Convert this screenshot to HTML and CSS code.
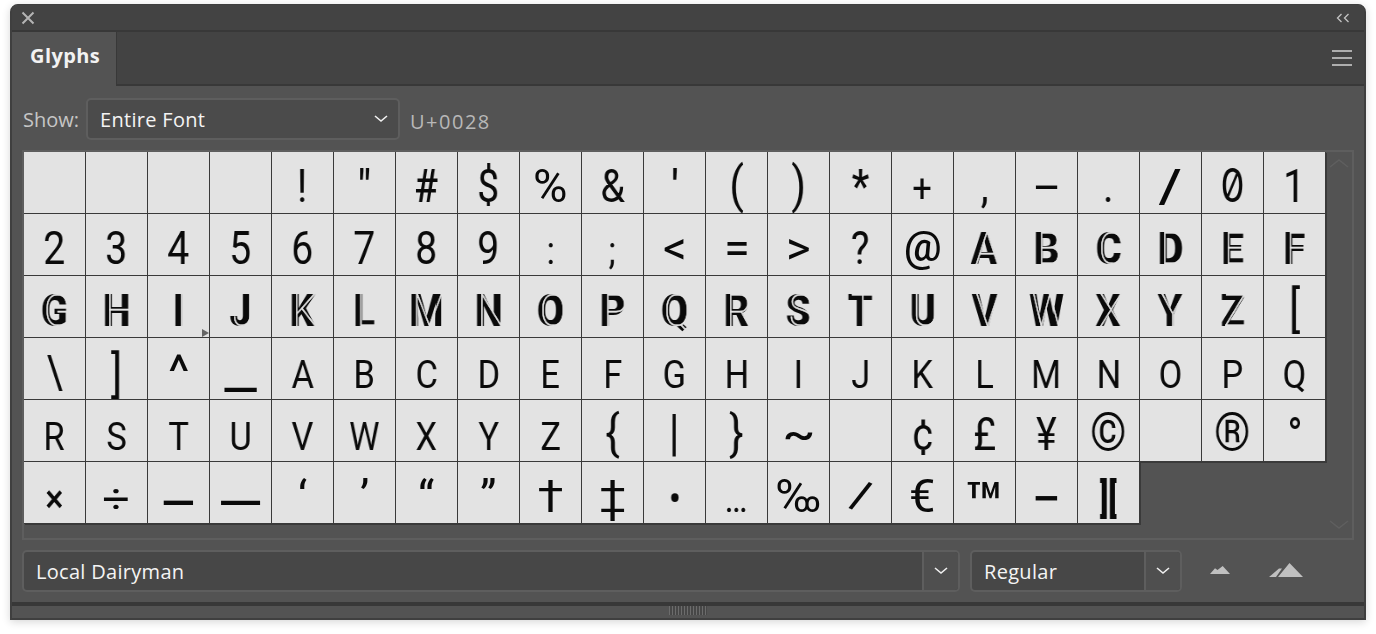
FILE: index.html
```html
<!DOCTYPE html>
<html lang="en">
<head>
<meta charset="utf-8">
<title>Glyphs</title>
<link rel="stylesheet" href="styles.css">
</head>
<body>
<div class="panel">
  <div class="titlebar">
    <svg class="ico" width="14" height="14" viewBox="0 0 14 14"><path d="M1.5 1.5l11 11M12.5 1.5l-11 11" stroke="#b4b4b4" stroke-width="2" fill="none"/></svg>
    <svg class="ico" width="14" height="10" viewBox="0 0 14 10"><path d="M5.5 1L1.5 5l4 4M12.5 1l-4 4 4 4" stroke="#c4c4c4" stroke-width="1.3" fill="none"/></svg>
  </div>
  <div class="tabs">
    <div class="tab">Glyphs</div>
    <svg class="menu" width="20" height="16" viewBox="0 0 20 16"><path d="M0 1h20M0 8h20M0 15h20" stroke="#aeaeae" stroke-width="2" fill="none"/></svg>
  </div>
  <div class="content">
    <div class="showrow">
      <span class="label">Show:</span>
      <div class="select show"><span class="value">Entire Font</span>
        <svg class="chev" width="14" height="8" viewBox="0 0 14 8"><path d="M1 1l6 5 6-5" stroke="#f0f0f0" stroke-width="1.6" fill="none"/></svg>
      </div>
      <span class="code">U+0028</span>
    </div>
    <div class="frame">
      <div class="grid">
        <div class="cell"></div><div class="cell"></div><div class="cell"></div><div class="cell"></div>
        <div class="cell"><span class="g d">!</span></div><div class="cell"><span class="g d up">"</span></div><div class="cell"><span class="g d b">#</span></div><div class="cell"><span class="g d">$</span></div><div class="cell"><span class="g d wider">%</span></div><div class="cell"><span class="g d">&amp;</span></div><div class="cell"><span class="g d up">'</span></div><div class="cell"><span class="g d tall">(</span></div><div class="cell"><span class="g d tall">)</span></div><div class="cell"><span class="g d b up">*</span></div><div class="cell"><span class="g s">+</span></div><div class="cell"><span class="g d">,</span></div><div class="cell"><span class="g d hy">-</span></div><div class="cell"><span class="g d">.</span></div><div class="cell"><span class="g d slash">/</span></div><div class="cell"><span class="g d zero">0</span></div><div class="cell"><span class="g d">1</span></div>

        <div class="cell"><span class="g d">2</span></div><div class="cell"><span class="g d">3</span></div><div class="cell"><span class="g d">4</span></div><div class="cell"><span class="g d">5</span></div><div class="cell"><span class="g d">6</span></div><div class="cell"><span class="g d">7</span></div><div class="cell"><span class="g d">8</span></div><div class="cell"><span class="g d">9</span></div><div class="cell"><span class="g s">:</span></div><div class="cell"><span class="g s">;</span></div><div class="cell"><span class="g s big">&lt;</span></div><div class="cell"><span class="g s big">=</span></div><div class="cell"><span class="g s big">&gt;</span></div><div class="cell"><span class="g d">?</span></div><div class="cell"><span class="g d at">@</span></div><div class="cell"><span class="g c" data-g="A">A</span></div><div class="cell"><span class="g c" data-g="B">B</span></div><div class="cell"><span class="g c" data-g="C">C</span></div><div class="cell"><span class="g c" data-g="D">D</span></div><div class="cell"><span class="g c" data-g="E">E</span></div><div class="cell"><span class="g c" data-g="F">F</span></div>

        <div class="cell"><span class="g c" data-g="G">G</span></div><div class="cell"><span class="g c" data-g="H">H</span></div><div class="cell mark"><span class="g c" data-g="I">I</span></div><div class="cell"><span class="g c" data-g="J">J</span></div><div class="cell"><span class="g c" data-g="K">K</span></div><div class="cell"><span class="g c" data-g="L">L</span></div><div class="cell"><span class="g c" data-g="M">M</span></div><div class="cell"><span class="g c" data-g="N">N</span></div><div class="cell"><span class="g c" data-g="O">O</span></div><div class="cell"><span class="g c" data-g="P">P</span></div><div class="cell"><span class="g c" data-g="Q">Q</span></div><div class="cell"><span class="g c" data-g="R">R</span></div><div class="cell"><span class="g c" data-g="S">S</span></div><div class="cell"><span class="g c" data-g="T">T</span></div><div class="cell"><span class="g c" data-g="U">U</span></div><div class="cell"><span class="g c" data-g="V">V</span></div><div class="cell"><span class="g c" data-g="W">W</span></div><div class="cell"><span class="g c" data-g="X">X</span></div><div class="cell"><span class="g c" data-g="Y">Y</span></div><div class="cell"><span class="g c" data-g="Z">Z</span></div><div class="cell"><span class="g d tall">[</span></div>

        <div class="cell"><span class="g d">\</span></div><div class="cell"><span class="g d tall low">]</span></div><div class="cell"><span class="g d caret">^</span></div><div class="cell"><span class="g d score">_</span></div><div class="cell"><span class="g s">A</span></div><div class="cell"><span class="g s">B</span></div><div class="cell"><span class="g s">C</span></div><div class="cell"><span class="g s">D</span></div><div class="cell"><span class="g s">E</span></div><div class="cell"><span class="g s">F</span></div><div class="cell"><span class="g s">G</span></div><div class="cell"><span class="g s">H</span></div><div class="cell"><span class="g s">I</span></div><div class="cell"><span class="g s">J</span></div><div class="cell"><span class="g s">K</span></div><div class="cell"><span class="g s">L</span></div><div class="cell"><span class="g s">M</span></div><div class="cell"><span class="g s">N</span></div><div class="cell"><span class="g s">O</span></div><div class="cell"><span class="g s">P</span></div><div class="cell"><span class="g s">Q</span></div>

        <div class="cell"><span class="g s">R</span></div><div class="cell"><span class="g s">S</span></div><div class="cell"><span class="g s">T</span></div><div class="cell"><span class="g s">U</span></div><div class="cell"><span class="g s">V</span></div><div class="cell"><span class="g s">W</span></div><div class="cell"><span class="g s">X</span></div><div class="cell"><span class="g s">Y</span></div><div class="cell"><span class="g s">Z</span></div><div class="cell"><span class="g d tall">{</span></div><div class="cell"><span class="g d tall">|</span></div><div class="cell"><span class="g d tall">}</span></div><div class="cell"><span class="g s tilde">~</span></div><div class="cell"></div><div class="cell"><span class="g d">¢</span></div><div class="cell"><span class="g d">£</span></div><div class="cell"><span class="g d">¥</span></div><div class="cell"><span class="g d ring">©</span></div><div class="cell"></div><div class="cell"><span class="g d ring">®</span></div><div class="cell"><span class="g d b up">°</span></div>

        <div class="cell"><span class="g s b">×</span></div><div class="cell"><span class="g s div">÷</span></div><div class="cell"><span class="g d dash">–</span></div><div class="cell"><span class="g d dash">—</span></div><div class="cell"><span class="g s quote">‘</span></div><div class="cell"><span class="g s quote">’</span></div><div class="cell"><span class="g s quote">“</span></div><div class="cell"><span class="g s quote">”</span></div><div class="cell"><span class="g d cross">†</span></div><div class="cell"><span class="g d cross">‡</span></div><div class="cell"><span class="g s b">•</span></div><div class="cell"><span class="g s">…</span></div><div class="cell"><span class="g d wider">‰</span></div><div class="cell"><span class="g d slash">⁄</span></div><div class="cell"><span class="g d wider">€</span></div><div class="cell"><span class="g s tm">™</span></div><div class="cell"><span class="g d minus">−</span></div><div class="cell"><span class="g s black">][</span></div>
      </div>
      <div class="scroll">
        <svg width="22" height="10" viewBox="0 0 22 10"><path d="M2 9l9-7 9 7" stroke="#5f5f5f" stroke-width="1.5" fill="none"/></svg>
        <svg width="22" height="10" viewBox="0 0 22 10"><path d="M2 1l9 7 9-7" stroke="#5f5f5f" stroke-width="1.5" fill="none"/></svg>
      </div>
    </div>
    <div class="fontrow">
      <div class="select family"><span class="value">Local Dairyman</span>
        <span class="arrow"><svg width="14" height="8" viewBox="0 0 14 8"><path d="M1 1l6 5 6-5" stroke="#f0f0f0" stroke-width="1.6" fill="none"/></svg></span>
      </div>
      <div class="select style"><span class="value">Regular</span>
        <span class="arrow"><svg width="14" height="8" viewBox="0 0 14 8"><path d="M1 1l6 5 6-5" stroke="#f0f0f0" stroke-width="1.6" fill="none"/></svg></span>
      </div>
      <svg class="small-m" width="20" height="8" viewBox="0 0 20 8"><path d="M0 8l5-5.700 2.500 1.700L12.700 0 20 8z" fill="#c0c0c0"/></svg>
      <svg class="large-m" width="34" height="14" viewBox="0 0 34 14"><path d="M0 14L10 5.500h3L7 14zM9 14L20.500 0 34 14z" fill="#c0c0c0"/></svg>
    </div>
  </div>
  <div class="strip"></div>
  <div class="grip"><span class="dots"></span></div>
</div>
</body>
</html>
```
FILE: styles.css
```css
* { box-sizing: border-box; }
html, body { margin: 0; padding: 0; background: #fff; }
body { height: 634px; overflow: hidden; padding: 4px 10px 0; }

.panel {
  width: 1356px;
  height: 616px;
  background: #535353;
  border: 2px solid #3f3f3f;
  border-top-width: 1px;
  border-radius: 8px 8px 0 0;
  box-shadow: 0 2px 8px rgba(0, 0, 0, .16);
  font-family: "Open Sans", "DejaVu Sans", sans-serif;
  display: flex;
  flex-direction: column;
}

.titlebar {
  height: 27px;
  flex: none;
  background: #434343;
  border-bottom: 2px solid #383838;
  border-radius: 6px 6px 0 0;
  display: flex;
  align-items: center;
  justify-content: space-between;
  padding: 0 14px 0 9px;
}
.ico { display: block; }

.tabs {
  height: 54px;
  flex: none;
  background: #434343;
  border-bottom: 2px solid #383838;
  display: flex;
  justify-content: space-between;
  align-items: center;
  padding-right: 12px;
}
.tab {
  width: 105px;
  height: 54px;
  align-self: flex-start;
  background: #535353;
  border-right: 1px solid #383838;
  color: #f2f2f2;
  font-size: 20px;
  font-weight: 700;
  padding: 9px 0 0 18px;
  line-height: 30px;
  letter-spacing: .4px;
}
.menu { display: block; margin-top: -1px; }

.content { padding: 12px 10px 10px; flex: none; }

.showrow { display: flex; align-items: center; height: 42px; }
.label { color: #c6c6c6; font-size: 20px; font-weight: 500; width: 64px; padding-left: 1px; flex: none; white-space: nowrap; }
.code { color: #b8b8b8; font-size: 20px; font-weight: 500; margin-left: 10px; letter-spacing: 1.5px; padding-top: 4px; }

.select {
  height: 42px;
  border: 2px solid #5e5e5e;
  border-radius: 5px;
  background: #474747;
  display: flex;
  align-items: center;
  color: #f4f4f4;
  font-size: 20px;
  font-weight: 500;
  letter-spacing: .3px;
}
.value { flex: 1; padding-left: 12px; white-space: nowrap; }
.select.show { width: 314px; background: #4b4b4b; padding-right: 10px; }
.select.family { width: 938px; }
.select.style { width: 212px; margin-left: 10px; }
.arrow {
  width: 36px;
  height: 100%;
  flex: none;
  border-left: 2px solid #5e5e5e;
  background: #4f4f4f;
  border-radius: 0 3px 3px 0;
  display: flex;
  align-items: center;
  justify-content: center;
}
.chev { flex: none; }

.frame {
  margin-top: 10px;
  width: 1332px;
  height: 390px;
  border: 2px solid #5e5e5e;
  display: flex;
}
.grid {
  width: 1302px;
  display: grid;
  grid-template-columns: repeat(21, 62px);
  grid-auto-rows: 62px;
  align-content: start;
}
.scroll {
  flex: 1;
  display: flex;
  flex-direction: column;
  justify-content: space-between;
  align-items: center;
  padding: 6px 0 8px;
}

.cell {
  position: relative;
  background: #e3e3e3;
  border-right: 1px solid #3a3a3a;
  border-bottom: 1px solid #3a3a3a;
  box-shadow: 1px 1px 0 #3a3a3a;
  text-align: center;
  font-family: Roboto, "Liberation Sans", sans-serif;
  font-size: 56px;
  line-height: 62px;
  color: #0a0a0a;
  white-space: nowrap;
}
.mark::after {
  content: "";
  position: absolute;
  right: 0;
  bottom: 0;
  border-left: 7px solid #666;
  border-top: 4px solid transparent;
  border-bottom: 4px solid transparent;
}

.g {
  display: inline-block;
  line-height: 1;
  position: relative;
  font-weight: 400;
  will-change: transform;
}
.d { font-size: 47px; transform: scaleX(.84); }
.s { font-size: 39px; transform: scaleX(.88); }
.b { font-weight: 500; }
.tall { font-size: 50px; transform: scaleX(.85); line-height: .9; }
.low { transform: translateY(3px) scaleX(.85); }
.up { font-weight: 500; }
.wider { transform: scaleX(1); }
.slash { font-weight: 500; transform: scaleX(1.25); }
.hy { transform: translateY(-1px) scaleX(1.9); }
.dash { transform: translateY(7px) scaleX(1.25); font-weight: 500; }
.minus { transform: translateY(3px) scaleX(1.1); font-weight: 500; }
.score { transform: scaleX(1.55); font-weight: 500; }
.caret { transform: scaleX(1.1); }
.big { font-size: 47px; transform: none; }
.at { font-size: 42px; font-weight: 500; transform: translateY(-3px) scaleX(1); }
.ring { font-size: 54px; transform: scaleX(.86); }
.tilde { font-weight: 500; transform: translateY(-3px) scaleX(1.25); }
.div { transform: scaleX(1.25); }
.cross { font-size: 45px; transform: scaleX(1.05); }
.quote { font-size: 46px; transform: translateY(1px); }
.tm { font-size: 62px; font-weight: 500; transform: translateY(12px) scaleX(1.02); }
.black { font-weight: 900; font-size: 40px; transform: scaleX(.75); }
.zero { font-family: Inter, Roboto, sans-serif; font-feature-settings: "zero" 1; font-size: 46px; }

.c {
  font-size: 45px;
  font-weight: 900;
  transform: scaleX(.88);
}
.c::after {
  content: attr(data-g);
  position: absolute;
  left: 3px;
  top: 0;
  color: #e3e3e3;
  font-weight: 100;
  width: 100%;
  text-align: center;
  -webkit-text-stroke: .5px #e3e3e3;
}

.fontrow { margin-top: 10px; display: flex; align-items: center; }
.small-m { margin-left: 28px; flex: none; display: block; margin-top: -2px; }
.large-m { margin-left: 39px; flex: none; display: block; margin-top: -2px; }

.strip { height: 4px; flex: none; background: #383838; }
.grip { flex: 1; display: flex; justify-content: center; }
.dots {
  width: 38px;
  height: 9px;
  background: repeating-linear-gradient(90deg, #6c6c6c 0 1px, #474747 1px 3px);
}
```
